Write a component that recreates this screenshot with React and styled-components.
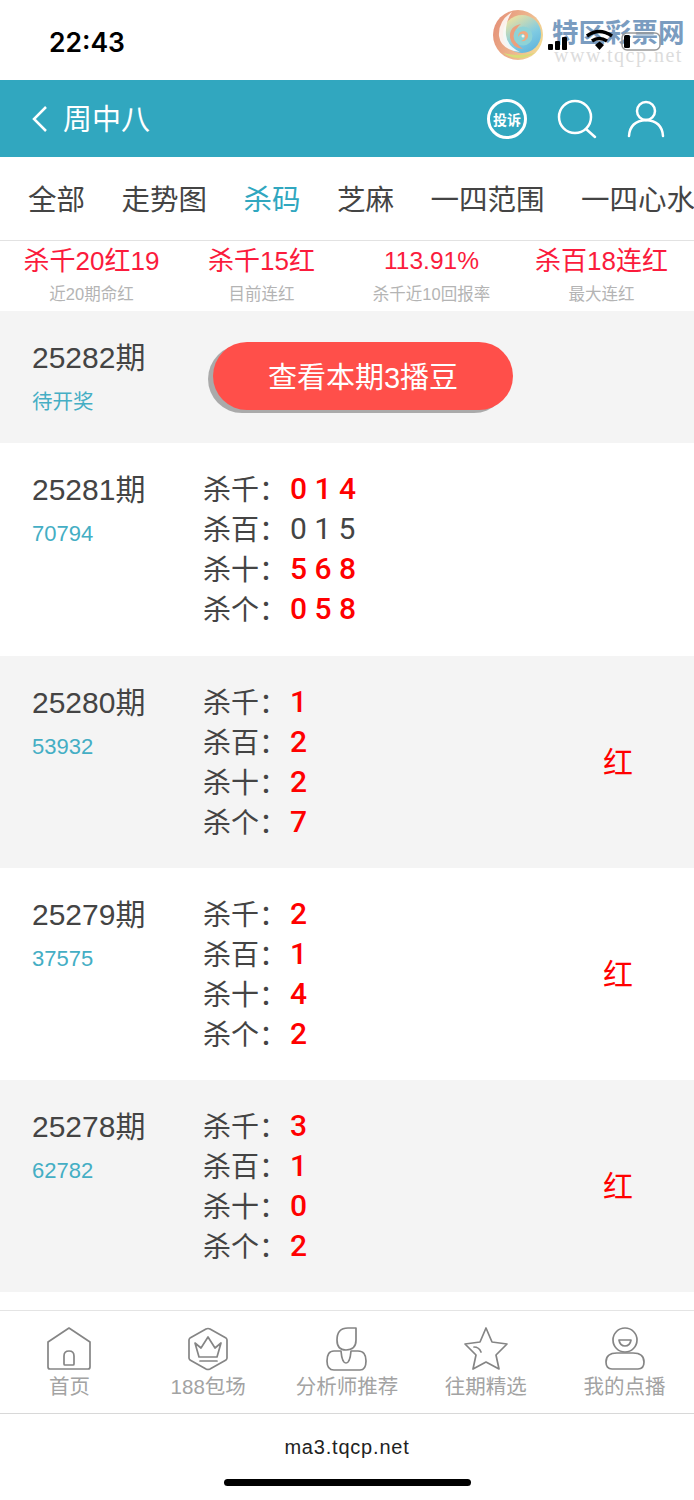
import styled, { createGlobalStyle } from 'styled-components';

const GlobalStyle = createGlobalStyle`
  html, body {
    margin: 0;
    padding: 0;
    background: #fff;
  }
  * {
    box-sizing: border-box;
  }
  body {
    font-family: 'Liberation Sans', 'Noto Sans CJK SC', sans-serif;
  }
`;

const Page = styled.div`
  width: 694px;
  height: 1500px;
  overflow: hidden;
  background: #fff;
  display: flex;
  flex-direction: column;
`;

const StatusBar = styled.div`
  position: relative;
  height: 80px;
  flex: none;
  padding: 25px 0 0 49px;
`;

const Clock = styled.div`
  font-family: 'Inter', sans-serif;
  font-size: 26.500px;
  line-height: 34px;
  font-weight: 600;
  color: #000;
`;

const Watermark = styled.div`
  position: absolute;
  left: 492px;
  top: 9px;
  width: 200px;
  height: 56px;
`;

const WatermarkTitle = styled.div`
  position: absolute;
  left: 60px;
  top: 8px;
  font-size: 26.500px;
  line-height: 32px;
  font-weight: 700;
  color: #7a9cc0;
  white-space: nowrap;
`;

const WatermarkUrl = styled.div`
  position: absolute;
  left: 62px;
  top: 36px;
  font-family: 'Liberation Serif', serif;
  font-size: 20px;
  line-height: 20px;
  letter-spacing: 1.500px;
  color: #dcdcdc;
  white-space: nowrap;
`;

const StatusIcons = styled.svg`
  position: absolute;
  left: 546px;
  top: 28px;
`;

const Header = styled.div`
  height: 77px;
  flex: none;
  background: #31a7bf;
  display: flex;
  align-items: center;
  padding: 0 29px 0 31px;
  color: #fff;
`;

const HeaderTitle = styled.div`
  margin-left: 14px;
  padding-top: 2px;
  font-size: 29px;
  line-height: 40px;
  color: #fff;
  flex: 1;
`;

const HeaderIcons = styled.div`
  display: flex;
  align-items: center;
  gap: 30px;
`;

const Complain = styled.div`
  width: 40px;
  height: 40px;
  border: 3px solid #fff;
  border-radius: 50%;
  display: flex;
  align-items: center;
  justify-content: center;
  font-size: 14px;
  font-weight: 700;
  color: #fff;
  white-space: nowrap;
`;

const Tabs = styled.div`
  height: 84px;
  flex: none;
  border-bottom: 1px solid #e2e2e2;
  display: flex;
  align-items: center;
  padding: 2px 0 0 28px;
  gap: 36.500px;
  overflow: hidden;
`;

const Tab = styled.div`
  font-size: 28.500px;
  line-height: 40px;
  white-space: nowrap;
  flex: none;
  color: ${(p) => (p.$active ? '#31a7bf' : '#444')};
`;

const Stats = styled.div`
  height: 70px;
  flex: none;
  display: grid;
  grid-template-columns: 183px 157px 183px 157px;
`;

const Stat = styled.div`
  display: flex;
  flex-direction: column;
  align-items: center;
  padding-top: 2px;
`;

const StatValue = styled.div`
  font-size: ${(p) => (p.$small ? 24.5 : 26)}px;
  line-height: 36px;
  color: #fb1b3c;
  white-space: nowrap;
`;

const StatLabel = styled.div`
  font-size: 16.500px;
  line-height: 22px;
  margin-top: 4px;
  color: #b4b4b4;
  white-space: nowrap;
`;

const Row = styled.div`
  height: ${(p) => p.$height}px;
  flex: none;
  display: flex;
  background: ${(p) => (p.$shaded ? '#f4f4f4' : '#fff')};
`;

const IssueCol = styled.div`
  width: 203px;
  flex: none;
  padding: 28px 0 0 32px;
`;

const Issue = styled.div`
  font-size: 30px;
  line-height: 38px;
  color: #444;
  white-space: nowrap;
`;

const Draw = styled.div`
  margin-top: 10px;
  font-size: ${(p) => (p.$pending ? 20.5 : 22)}px;
  line-height: 30px;
  color: #44aec4;
`;

const BuyArea = styled.div`
  padding: 31px 0 0 10px;
`;

const BuyButton = styled.div`
  width: 300px;
  height: 68px;
  border-radius: 34px;
  background: #ff4f4a;
  box-shadow: -5px 3px 0 #aaa;
  display: flex;
  align-items: center;
  justify-content: center;
  padding-bottom: 3px;
  font-size: 29px;
  color: #fff;
  white-space: nowrap;
`;

const Picks = styled.div`
  width: 400px;
  flex: none;
  padding-top: 25px;
`;

const PickLine = styled.div`
  height: 40px;
  display: flex;
  align-items: center;
  white-space: nowrap;
`;

const PickLabel = styled.span`
  width: 87px;
  font-size: 28px;
  color: #444;
`;

const PickDigits = styled.span`
  font-family: 'Roboto', sans-serif;
  font-size: 30px;
  font-weight: ${(p) => (p.$hit ? 500 : 400)};
  color: ${(p) => (p.$hit ? '#ff0000' : '#444')};
`;

const Result = styled.div`
  flex: 1;
  display: flex;
  align-items: center;
  padding-bottom: 4px;
  font-size: 30px;
  color: #ff0000;
`;

const Spacer = styled.div`
  height: 18px;
  flex: none;
`;

const Nav = styled.div`
  height: 104px;
  flex: none;
  display: grid;
  grid-template-columns: repeat(5, 1fr);
  border-top: 1px solid #e4e4e4;
  border-bottom: 1px solid #d8d8d8;
`;

const NavItem = styled.div`
  display: flex;
  flex-direction: column;
  align-items: center;
  padding-top: 16px;
`;

const NavIcon = styled.svg`
  width: 46px;
  height: 44px;
  flex: none;
  fill: none;
  stroke: #858585;
  stroke-width: 1.700;
  stroke-linejoin: round;
  stroke-linecap: round;
`;

const NavLabel = styled.div`
  margin-top: 1px;
  font-size: 20.500px;
  line-height: 30px;
  color: #a3a3a3;
  white-space: nowrap;
`;

const AddressBar = styled.div`
  flex: 1;
  position: relative;
  display: flex;
  justify-content: center;
  padding-top: 21px;
  font-size: 20px;
  line-height: 24px;
  letter-spacing: 0.800px;
  color: #222;
`;

const HomeIndicator = styled.div`
  position: absolute;
  left: 224px;
  top: 65px;
  width: 247px;
  height: 7px;
  border-radius: 4px;
  background: #000;
`;

const tabs = ['全部', '走势图', '杀码', '芝麻', '一四范围', '一四心水'];

const stats = [
  { value: '杀千20红19', label: '近20期命红' },
  { value: '杀千15红', label: '目前连红' },
  { value: '113.91%', label: '杀千近10回报率', small: true },
  { value: '杀百18连红', label: '最大连红' },
];

const rows = [
  {
    issue: '25281期',
    draw: '70794',
    height: 213,
    picks: [
      ['杀千：', '0 1 4', true],
      ['杀百：', '0 1 5', false],
      ['杀十：', '5 6 8', true],
      ['杀个：', '0 5 8', true],
    ],
  },
  {
    issue: '25280期',
    draw: '53932',
    result: '红',
    shaded: true,
    height: 212,
    picks: [
      ['杀千：', '1', true],
      ['杀百：', '2', true],
      ['杀十：', '2', true],
      ['杀个：', '7', true],
    ],
  },
  {
    issue: '25279期',
    draw: '37575',
    result: '红',
    height: 212,
    picks: [
      ['杀千：', '2', true],
      ['杀百：', '1', true],
      ['杀十：', '4', true],
      ['杀个：', '2', true],
    ],
  },
  {
    issue: '25278期',
    draw: '62782',
    result: '红',
    shaded: true,
    height: 212,
    picks: [
      ['杀千：', '3', true],
      ['杀百：', '1', true],
      ['杀十：', '0', true],
      ['杀个：', '2', true],
    ],
  },
];

const navItems = [
  {
    label: '首页',
    icon: (
      <>
        <path d="M2 15 L23 1 L44 15 V40 Q44 42 42 42 H4 Q2 42 2 40 Z" />
        <path d="M18 37 V29 Q18 24 23 24 Q28 24 28 29 V37 Q28 38 27 38 H19 Q18 38 18 37 Z" />
      </>
    ),
  },
  {
    label: '188包场',
    icon: (
      <>
        <path d="M21 2 Q23 1 25 2 L41 11 Q42 12 42 13 V31 Q42 32 41 33 L25 42 Q23 43 21 42 L5 33 Q4 32 4 31 V13 Q4 12 5 11 Z" />
        <path d="M10 16 L16 21 L23 10 L30 21 L36 16 L32 30 H14 Z" />
        <path d="M15 34 H32" />
      </>
    ),
  },
  {
    label: '分析师推荐',
    icon: (
      <>
        <path d="M32 1 V13 Q32 23 22 23 Q13 23 13 13 Q13 1 24 1 Z" />
        <path d="M17 24 H10 Q3 24 3 34 Q3 43 10 43 H36 Q42 43 42 34 Q42 24 34 24 H27 Q26 36 22 36 Q18 36 17 24 Z" />
      </>
    ),
  },
  {
    label: '往期精选',
    icon: (
      <>
        <path d="M23 1 L29 15 L44 17 L33 28 L36 42 L23 35 L10 42 L13 28 L2 17 L17 15 Z" />
        <path d="M11 20 Q16 20 18 25" />
      </>
    ),
  },
  {
    label: '我的点播',
    icon: (
      <>
        <circle cx="23" cy="13" r="12" />
        <path d="M17 13 H29 Q28 19 23 19 Q18 19 17 13 Z" />
        <path d="M15 26 H31 Q42 26 42 35 Q42 42 36 42 H10 Q4 42 4 35 Q4 26 15 26 Z" />
      </>
    ),
  },
];

const App = () => {
  return (
    <Page>
      <GlobalStyle />
      <StatusBar>
        <Clock>22:43</Clock>
        <Watermark>
          <svg width="54" height="52" viewBox="0 0 54 52">
            <defs>
              <linearGradient id="logoOuter" x1="0" y1="0.3" x2="1" y2="0.7">
                <stop offset="0" stopColor="#e59279" />
                <stop offset="0.6" stopColor="#eeb98f" />
                <stop offset="1" stopColor="#f2dc92" />
              </linearGradient>
              <linearGradient id="logoInner" x1="0.2" y1="0" x2="0.8" y2="1">
                <stop offset="0" stopColor="#f7e39a" />
                <stop offset="0.6" stopColor="#7fcbe2" />
                <stop offset="1" stopColor="#5fb3dc" />
              </linearGradient>
            </defs>
            <circle cx="26" cy="26" r="25" fill="url(#logoOuter)" />
            <circle cx="30" cy="25" r="19" fill="url(#logoInner)" />
            <path d="M20 3 Q6 12 7 27 Q9 41 28 43 Q15 37 14 26 Q13 13 20 3 Z" fill="#fff" opacity="0.85" />
            <path d="M29 15 Q17 17 18 29 Q20 39 31 40 Q23 35 23 27 Q23 19 29 15 Z" fill="#ec9f7c" />
            <circle cx="31" cy="27" r="9.500" fill="#8ed3d6" />
            <path d="M26 28 Q26 22 32 22 Q37 23 36 28 Q34 33 29 32 Q33 31 33 27 Q32 24 29 25 Q27 26 26 28 Z" fill="#f2a97f" />
            <circle cx="31" cy="27" r="1.500" fill="#f3f6ef" />
            <path d="M11 44 Q26 54 43 44 Q26 48 11 44 Z" fill="#d8dc78" />
          </svg>
          <WatermarkTitle>特区彩票网</WatermarkTitle>
          <WatermarkUrl>www.tqcp.net</WatermarkUrl>
        </Watermark>
        <StatusIcons width="118" height="26" viewBox="0 0 118 26">
          <rect x="2" y="16" width="5" height="6" rx="1" fill="#000" />
          <rect x="9" y="13" width="5" height="9" rx="1" fill="#000" />
          <rect x="16" y="9" width="5" height="13" rx="1" fill="#000" />
          <path d="M41 8 Q53 -1 66 8" stroke="#000" strokeWidth="3.500" fill="none" />
          <path d="M46 13 Q53 8 61 13" stroke="#000" strokeWidth="3.500" fill="none" />
          <path d="M49 17 L53.500 13.500 L58 17 L53.500 22 Z" fill="#000" />
          <rect x="76" y="5" width="38" height="17" rx="5" fill="none" stroke="#999" strokeWidth="1.500" />
          <rect x="78" y="7" width="6" height="13" rx="1.500" fill="#000" />
        </StatusIcons>
      </StatusBar>

      <Header>
        <svg width="18" height="28" viewBox="0 0 18 28" fill="none" stroke="#fff" strokeWidth="2.500">
          <path d="M15 2 L3 14 L15 26" />
        </svg>
        <HeaderTitle>周中八</HeaderTitle>
        <HeaderIcons>
          <Complain>投诉</Complain>
          <svg width="40" height="40" viewBox="0 0 40 40" fill="none" stroke="#fff" strokeWidth="2.500" strokeLinecap="round">
            <circle cx="18" cy="18" r="16" />
            <path d="M29 30 L38 38" />
          </svg>
          <svg width="38" height="38" viewBox="0 0 38 38" fill="none" stroke="#fff" strokeWidth="2.500" strokeLinecap="round">
            <circle cx="19" cy="11" r="9" />
            <path d="M2 36 Q3 21 19 20 Q35 21 36 36" />
          </svg>
        </HeaderIcons>
      </Header>

      <Tabs>
        {tabs.map((tab) => (
          <Tab key={tab} $active={tab === '杀码'}>{tab}</Tab>
        ))}
      </Tabs>

      <Stats>
        {stats.map((stat) => (
          <Stat key={stat.label}>
            <StatValue $small={stat.small}>{stat.value}</StatValue>
            <StatLabel>{stat.label}</StatLabel>
          </Stat>
        ))}
      </Stats>

      <Row $height={132} $shaded>
        <IssueCol>
          <Issue>25282期</Issue>
          <Draw $pending>待开奖</Draw>
        </IssueCol>
        <BuyArea>
          <BuyButton>查看本期3播豆</BuyButton>
        </BuyArea>
      </Row>

      {rows.map((row) => (
        <Row key={row.issue} $height={row.height} $shaded={row.shaded}>
          <IssueCol>
            <Issue>{row.issue}</Issue>
            <Draw>{row.draw}</Draw>
          </IssueCol>
          <Picks>
            {row.picks.map(([label, digits, hit]) => (
              <PickLine key={label}>
                <PickLabel>{label}</PickLabel>
                <PickDigits $hit={hit}>{digits}</PickDigits>
              </PickLine>
            ))}
          </Picks>
          {row.result && <Result>{row.result}</Result>}
        </Row>
      ))}

      <Spacer />

      <Nav>
        {navItems.map((item) => (
          <NavItem key={item.label}>
            <NavIcon viewBox="0 0 46 44">{item.icon}</NavIcon>
            <NavLabel>{item.label}</NavLabel>
          </NavItem>
        ))}
      </Nav>

      <AddressBar>
        ma3.tqcp.net
        <HomeIndicator />
      </AddressBar>
    </Page>
  );
};

export default App;
